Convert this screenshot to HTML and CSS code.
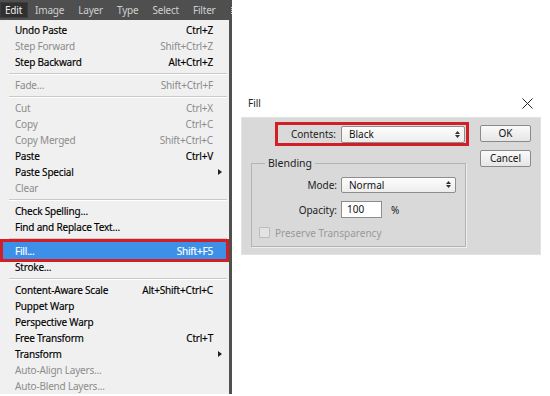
FILE: index.html
```html
<!DOCTYPE html>
<html lang="en">
<head>
    <meta charset="UTF-8">
    <meta name="viewport" content="width=device-width, initial-scale=1.0">
    <title>Edit menu and Fill dialog</title>
    <link rel="stylesheet" href="styles.css">
</head>
<body>
    <div class="menu-col">
        <div class="menubar">
            <span class="bar-item open">Edit</span>
            <span class="bar-item">Image</span>
            <span class="bar-item">Layer</span>
            <span class="bar-item">Type</span>
            <span class="bar-item">Select</span>
            <span class="bar-item">Filter</span>
            <span class="bar-cut"></span>
        </div>

        <div class="menu">
            <div class="item"><span>Undo Paste</span><span>Ctrl+Z</span></div>
            <div class="item off"><span>Step Forward</span><span>Shift+Ctrl+Z</span></div>
            <div class="item"><span>Step Backward</span><span>Alt+Ctrl+Z</span></div>
            <div class="sep"></div>
            <div class="item off"><span>Fade...</span><span>Shift+Ctrl+F</span></div>
            <div class="sep"></div>
            <div class="item off"><span>Cut</span><span>Ctrl+X</span></div>
            <div class="item off"><span>Copy</span><span>Ctrl+C</span></div>
            <div class="item off"><span>Copy Merged</span><span>Shift+Ctrl+C</span></div>
            <div class="item"><span>Paste</span><span>Ctrl+V</span></div>
            <div class="item"><span>Paste Special</span><span class="arrow"></span></div>
            <div class="item off"><span>Clear</span></div>
            <div class="sep"></div>
            <div class="item"><span>Check Spelling...</span></div>
            <div class="item"><span>Find and Replace Text...</span></div>
            <div class="sep"></div>
            <div class="item hot"><span>Fill...</span><span>Shift+F5</span></div>
            <div class="item"><span>Stroke...</span></div>
            <div class="sep"></div>
            <div class="item"><span>Content-Aware Scale</span><span>Alt+Shift+Ctrl+C</span></div>
            <div class="item"><span>Puppet Warp</span></div>
            <div class="item"><span>Perspective Warp</span></div>
            <div class="item"><span>Free Transform</span><span>Ctrl+T</span></div>
            <div class="item"><span>Transform</span><span class="arrow"></span></div>
            <div class="item off"><span>Auto-Align Layers...</span></div>
            <div class="item off"><span>Auto-Blend Layers...</span></div>
        </div>
    </div>

    <div class="dialog">
        <div class="dlg-title">
            <span>Fill</span>
            <svg class="close" width="11" height="11" viewBox="0 0 11 11">
                <path d="M0.5 0.5 L10.5 10.5 M10.5 0.5 L0.5 10.5" stroke="#222" stroke-width="1" fill="none"/>
            </svg>
        </div>

        <div class="dlg-body">
            <div class="dlg-main">
                <div class="contents-row">
                    <label>Contents:</label>
                    <div class="dropdown wide">
                        <span>Black</span>
                        <svg width="5" height="7" viewBox="0 0 5 7"><path d="M2.5 0 L5 3 L0 3 Z M0 4 L5 4 L2.5 7 Z" fill="#333"/></svg>
                    </div>
                </div>

                <fieldset class="group">
                    <legend>Blending</legend>
                    <div class="field">
                        <label>Mode:</label>
                        <div class="dropdown mode">
                            <span>Normal</span>
                            <svg width="5" height="7" viewBox="0 0 5 7"><path d="M2.5 0 L5 3 L0 3 Z M0 4 L5 4 L2.5 7 Z" fill="#333"/></svg>
                        </div>
                    </div>
                    <div class="field">
                        <label>Opacity:</label>
                        <div class="num">100</div>
                        <span class="unit">%</span>
                    </div>
                    <div class="check">
                        <span class="box"></span>
                        <span>Preserve Transparency</span>
                    </div>
                </fieldset>
            </div>

            <div class="dlg-buttons">
                <div class="btn">OK</div>
                <div class="btn">Cancel</div>
            </div>
        </div>
    </div>
</body>
</html>
```

FILE: styles.css
```css
body {
    margin: 0;
    background: #fff;
    font-family: "Noto Sans", "Open Sans", sans-serif;
    font-size: 10px;
    display: flex;
    align-items: flex-start;
}

/* left: photoshop edit menu */
.menu-col {
    width: 232px;
    flex-shrink: 0;
}
.menubar {
    height: 20px;
    background: #4f4f4f;
    display: flex;
    align-items: center;
    overflow: hidden;
    white-space: nowrap;
    letter-spacing: -0.2px;
}
.bar-item {
    color: #cfcfcf;
    padding: 0 7px;
    line-height: 16px;
}
.bar-item.open {
    background: #303030;
    color: #eee;
    padding: 0 6px 0 5px;
    box-shadow: inset 0 0 0 1px #3c3c3c;
}
.bar-cut {
    width: 1px;
    height: 7px;
    margin-left: 8px;
    border-left: 1px dotted #cfcfcf;
}
.menu {
    background: #f0f0f0;
    width: 229px;
    border-right: 3px solid #505050;
    padding-top: 2px;
    letter-spacing: -0.2px;
}
.item {
    height: 16px;
    display: flex;
    align-items: center;
    justify-content: space-between;
    padding: 0 16px 0 15px;
    color: #000;
    -webkit-text-stroke: 0.15px #000;
}
.item.off {
    color: #8c8c8c;
    -webkit-text-stroke: 0;
}
.item.hot {
    background: #3d90e8;
    color: #fff;
    -webkit-text-stroke: 0.15px #fff;
    height: 17px;
    margin: 0 3px 0 3px;
    padding: 0 13px 0 12px;
    outline: 3px solid #d21f27;
}
.sep {
    height: 7px;
    display: flex;
    align-items: center;
    margin: 0 2px 0 9px;
}
.sep::after {
    content: "";
    flex: 1;
    border-top: 1px solid #c9c9c9;
    border-bottom: 1px solid #fff;
}
.arrow {
    width: 0;
    height: 0;
    border-left: 4px solid #222;
    border-top: 3px solid transparent;
    border-bottom: 3px solid transparent;
    margin-right: -9px;
}

/* right: fill dialog */
.dialog {
    width: 300px;
    margin: 92px 0 0 9px;
    color: #222;
}
.dlg-title {
    height: 22px;
    padding: 0 8px 3px 7px;
    display: flex;
    align-items: center;
    justify-content: space-between;
}
.dlg-body {
    height: 138px;
    box-sizing: border-box;
    background: #d9d9d9;
    border: 1px solid #e2e2e2;
    padding-top: 4px;
    display: flex;
}
.dlg-main {
    width: 238px;
}
.contents-row {
    margin-left: 33px;
    width: 194px;
    height: 24px;
    box-sizing: border-box;
    border: 3px solid #d21f27;
    display: flex;
    align-items: center;
    justify-content: flex-end;
    padding-right: 1px;
}
.contents-row label {
    margin-right: 5px;
}
.dropdown {
    box-sizing: border-box;
    border: 1px solid #8d8d8d;
    border-radius: 2px;
    background: linear-gradient(#fdfdfd, #ededed);
    display: flex;
    align-items: center;
    justify-content: space-between;
    padding: 0 4px 0 7px;
    color: #111;
}
.dropdown.wide {
    width: 124px;
    height: 17px;
}
.dropdown.mode {
    width: 115px;
    height: 16px;
}

.group {
    margin: 10px 0 0 9px;
    width: 215px;
    box-sizing: border-box;
    border: 1px solid #b3b3b3;
    box-shadow: 1px 1px 0 #efefef;
    padding: 6px 0 7px 0;
    min-width: 0;
}
.group legend {
    margin-left: 13px;
    padding: 0 3px;
    line-height: 14px;
    font-size: 10.5px;
}
.field {
    display: flex;
    align-items: center;
    height: 17px;
    margin-bottom: 8px;
}
.field label {
    width: 85px;
    margin-right: 4px;
    text-align: right;
}
.num {
    width: 41px;
    height: 17px;
    box-sizing: border-box;
    border: 1px solid #8d8d8d;
    background: #fff;
    padding-left: 5px;
    line-height: 15px;
    color: #111;
}
.unit {
    margin-left: 9px;
}
.check {
    display: flex;
    align-items: center;
    height: 13px;
    color: #9a9a9a;
}
.check .box {
    width: 11px;
    height: 11px;
    box-sizing: border-box;
    border: 1px solid #bcbcbc;
    background: #e3e3e3;
    border-radius: 1px;
    margin: 0 5px 0 7px;
}

.dlg-buttons {
    padding-top: 3px;
    display: flex;
    flex-direction: column;
    gap: 8px;
}
.btn {
    width: 51px;
    height: 17px;
    box-sizing: border-box;
    border: 1px solid #8a8a8a;
    border-radius: 2px;
    background: linear-gradient(#fafafa, #e6e6e6);
    text-align: center;
    line-height: 15px;
    color: #111;
}
```
